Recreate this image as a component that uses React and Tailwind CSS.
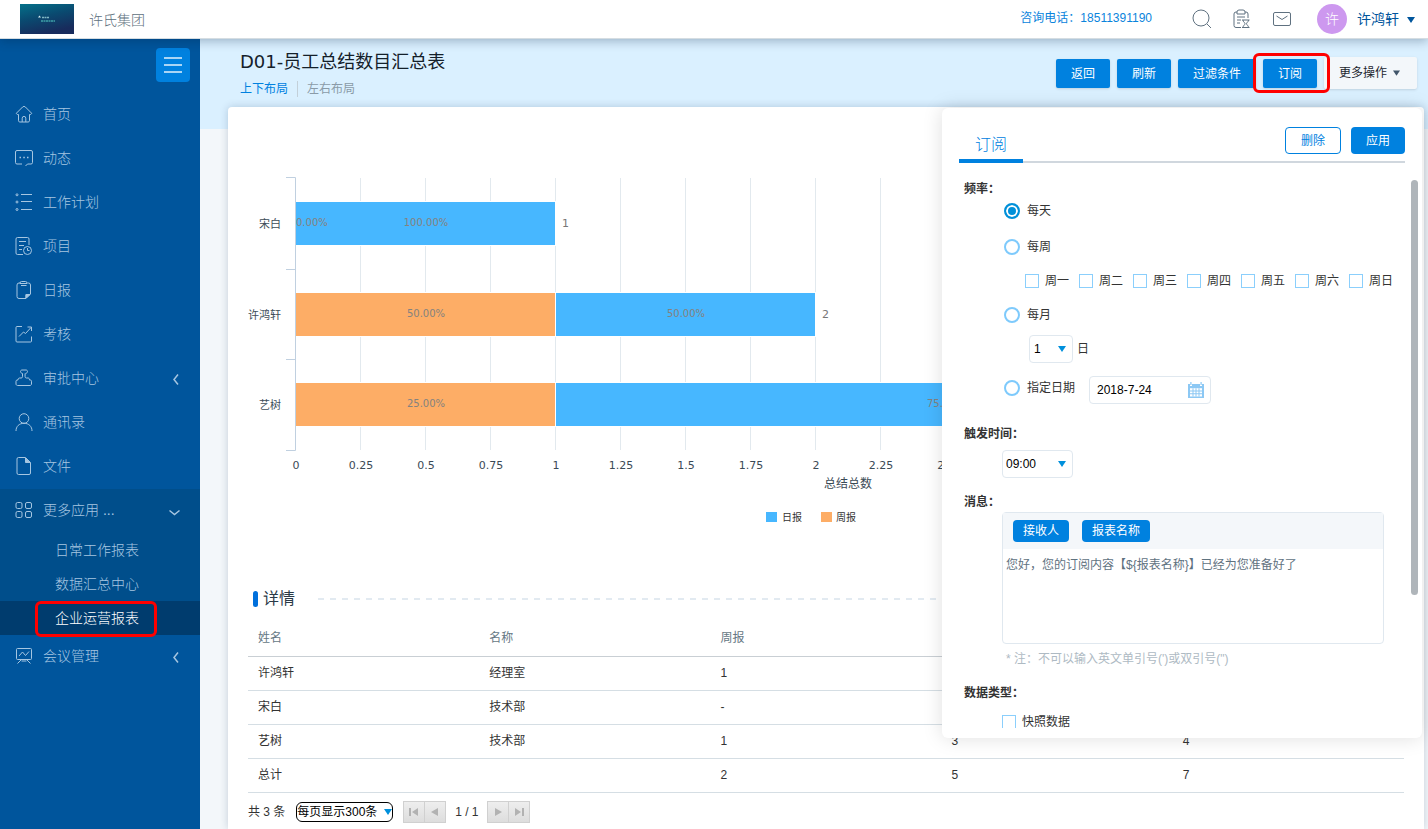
import React from "react";

const icons = {
  home: (
    <>
      <path d="M3.5 9.5v6.2c0 .7.5 1.3 1.300 1.300h8.400c.7 0 1.300-.6 1.300-1.300V9.500h1.200L16.700 8.300 10.400 2a2 2 0 0 0-2.800 0L1.300 8.300l1 1.200z" />
      <path d="M7.200 17v-3.800a1.800 1.800 0 0 1 3.600 0V17" />
    </>
  ),
  message: (
    <>
      <path d="M7 15H2a1.500 1.500 0 0 1-1.500-1.500V3A1.500 1.500 0 0 1 2 1.500h14A1.500 1.500 0 0 1 17.500 3v10.500A1.500 1.500 0 0 1 16 15h-3.500L10.500 17" />
      <path d="M4.500 8.500h1.500M8.300 8.500h1.500M12 8.500h1.500" strokeWidth="1.500" />
    </>
  ),
  list: (
    <>
      <circle cx="2" cy="1.800" r="1" />
      <circle cx="2" cy="9" r="1" />
      <circle cx="2" cy="16.500" r="1" />
      <path d="M6 1.500h11M6 8.500h11M6 16.500h11" />
    </>
  ),
  project: (
    <>
      <path d="M8 17.500H2.500A1.500 1.500 0 0 1 1 16V2A1.500 1.500 0 0 1 2.500.5h10A1.500 1.500 0 0 1 14 2v6M4 4.500h7M4 8.500h5M4 12.500h3" />
      <circle cx="12.500" cy="13.500" r="4" />
      <path d="M12.500 11v2.500h2" />
    </>
  ),
  daily: (
    <>
      <path d="M5 2H4a2 2 0 0 0-2 2v11.500a2 2 0 0 0 2 2h7l4.500-4.500V4a2 2 0 0 0-2-2h-1" />
      <path d="M5 2.500V2A1.500 1.500 0 0 1 6.500.5h4A1.500 1.500 0 0 1 12 2v.5zM6 4.500h5.500M11 17v-3.500h4" />
      <path d="M11 13.500h4l-4 3.500z" fill="currentColor" />
    </>
  ),
  review: (
    <>
      <path d="M7 1.500H2A1 1 0 0 0 1 2.500V16a1 1 0 0 0 1 1h13.500a1 1 0 0 0 1-1v-4.500" />
      <path d="M4 11.500l4.500-4.500 2 1.500L16 2.500M12.500 2h4v4" />
    </>
  ),
  stamp: (
    <>
      <path d="M7.500 4.500C6 4 5.500 3.500 5.500 2.500c0-1 .8-1.500 1.500-1.500h4c.8 0 1.500.5 1.500 1.500s-.5 1.500-2 2" />
      <path d="M7.500 4.500v3.200c0 .8-.5 1.300-1.300 1.300H4.500c-.8 0-1.500.7-1.500 2H2c-.5 0-1 .6-1 1.200v2.800c0 .8.700 1.500 1.500 1.500h12.500c.8 0 1.500-.7 1.500-1.500v-2.800c0-.6-.5-1.200-1-1.200h-1c0-1.300-.6-2-1.400-2h-1.700c-.8 0-1.300-.5-1.300-1.300V4.500" />
    </>
  ),
  user: (
    <>
      <circle cx="9" cy="5.500" r="4.800" />
      <path d="M1 18c0-4.500 3-7.700 8-7.700s8 3.200 8 7.700" />
    </>
  ),
  file: (
    <>
      <path d="M10.500.5h-7A1.500 1.500 0 0 0 2 2v14a1.500 1.500 0 0 0 1.500 1.500h10.500a1.500 1.500 0 0 0 1.500-1.500V5.500z" />
      <path d="M10.500 1v4.500h4.500z" fill="currentColor" />
    </>
  ),
  apps: (
    <>
      <rect x="1" y="1.500" width="6" height="6" rx="1.500" />
      <rect x="10.500" y="1.500" width="6" height="6" rx="1.500" />
      <rect x="1" y="10.500" width="6" height="6" rx="1.500" />
      <rect x="10.500" y="10.500" width="6" height="6" rx="1.500" />
    </>
  ),
  board: (
    <>
      <rect x="1.500" y="1.500" width="15" height="11" rx="1" />
      <path d="M4 9l3.500-4 3 3.500L14 4.500M6.500 12.500l-4 4M11.500 12.500l4 4M6.500 14h5" />
    </>
  ),
};

const Icon = ({ name }) => (
  <svg className="h-[18px] w-[18px] shrink-0" viewBox="0 0 18 18" fill="none" stroke="currentColor" strokeWidth="1">
    {icons[name]}
  </svg>
);

const Caret = ({ className }) => (
  <svg className={className} viewBox="0 0 8 6" fill="currentColor">
    <path d="M0 0h8L4 6z" />
  </svg>
);

const menu = [
  { icon: "home", label: "首页" },
  { icon: "message", label: "动态" },
  { icon: "list", label: "工作计划" },
  { icon: "project", label: "项目" },
  { icon: "daily", label: "日报" },
  { icon: "review", label: "考核" },
  { icon: "stamp", label: "审批中心", arrow: true },
  { icon: "user", label: "通讯录" },
  { icon: "file", label: "文件" },
];

const MenuLink = ({ icon, label, arrow }) => (
  <a href="#" className="flex h-11 items-center pr-5 pb-0.5 pl-[15px]">
    <Icon name={icon} />
    <span className="ml-2.5 flex-1">{label}</span>
    {arrow && (
      <svg className="mt-0.5 h-3 w-2" viewBox="0 0 8 12" fill="none" stroke="currentColor" strokeWidth="1.500">
        <path d="M6 1.500L2 6.500l4 5" />
      </svg>
    )}
  </a>
);

const Sidebar = () => (
  <nav className="w-50 shrink-0 bg-[#00559c] pt-[9px] text-sm font-light text-[#a6c6e1]">
    <div className="mb-[11px] flex justify-end pr-2.5">
      <button aria-label="收起菜单" className="flex h-[34px] w-[34px] flex-col items-center justify-center gap-[5px] rounded-sm bg-[#0081df]">
        <span className="h-0.5 w-[18px] bg-[#a9d5f5]" />
        <span className="h-0.5 w-[18px] bg-[#a9d5f5]" />
        <span className="h-0.5 w-[18px] bg-[#a9d5f5]" />
      </button>
    </div>
    {menu.map((item) => (
      <MenuLink key={item.label} {...item} />
    ))}
    <div className="bg-[#004e8b]">
      <a href="#" className="flex h-11 items-center pr-5 pb-0.5 pl-[15px]">
        <Icon name="apps" />
        <span className="ml-2.5 flex-1">更多应用 ...</span>
        <svg className="mt-1 h-2 w-[11px]" viewBox="0 0 11 8" fill="none" stroke="currentColor" strokeWidth="1.500">
          <path d="M.5 2.500l5 4 5-4" />
        </svg>
      </a>
      <a href="#" className="flex h-[34px] items-center pl-[55px]">日常工作报表</a>
      <a href="#" className="flex h-[34px] items-center pl-[55px]">数据汇总中心</a>
      <a href="#" className="relative flex h-[34px] items-center bg-[#003c6e] pl-[55px] text-white">
        企业运营报表
        <span className="absolute top-0 -bottom-0.5 left-[35px] w-[122px] rounded-md border-3 border-[#ff0000]" />
      </a>
    </div>
    <MenuLink icon="board" label="会议管理" arrow />
  </nav>
);

const TopBar = () => (
  <header className="relative z-10 flex h-[39px] items-center border-b border-[#d5dde2] bg-white pr-[13px] pl-5 shadow-[0_2px_10px_rgba(0,30,60,0.3)]">
    <svg className="h-[30px] w-[54px]" viewBox="0 0 54 30">
      <defs>
        <linearGradient id="logo" x1="0" y1="0" x2="0.400" y2="1">
          <stop offset="0" stopColor="#04718a" />
          <stop offset="0.500" stopColor="#0a4a70" />
          <stop offset="1" stopColor="#182b5c" />
        </linearGradient>
      </defs>
      <rect width="54" height="30" fill="url(#logo)" />
      <path d="M18 13.500l1.500-2 1.500 2z" fill="#d6eef2" />
      <path d="M22 13.500h7" stroke="#7fb6c4" strokeWidth="1.500" strokeDasharray="2 .5" />
      <path d="M21 17h14" stroke="#3fa0a8" strokeWidth="1.500" strokeDasharray="2 .5" />
    </svg>
    <span className="ml-[15px] flex-1 pt-0.5 text-sm font-light text-[#5d6f7c]">许氏集团</span>
    <span className="pb-0.5 text-xs text-[#0a84dc]">咨询电话：18511391190</span>
    <div className="ml-10 flex items-center gap-5 text-[#5f7180]">
      <button aria-label="搜索">
        <svg className="h-5 w-5" viewBox="0 0 20 20" fill="none" stroke="currentColor">
          <circle cx="9" cy="9" r="8" />
          <path d="M15 15l4 4" />
        </svg>
      </button>
      <button aria-label="待办">
        <svg className="h-5 w-5" viewBox="0 0 20 20" fill="none" stroke="currentColor">
          <path d="M9 18.500H4A2 2 0 0 1 2 16.500V5a2 2 0 0 1 2-2h1M13 3h1a2 2 0 0 1 2 2v4" />
          <path d="M5 5V3a2 2 0 0 1 2-2h4a2 2 0 0 1 2 2v2zM5 8h8M5 11h4M5 14h3" />
          <path d="M10 11h7.500M10 18.500h7.500M11 11c0 2 2 2.500 2 3.700s-2 1.800-2 3.800M16.500 11c0 2-2 2.500-2 3.700s2 1.800 2 3.800" />
        </svg>
      </button>
      <button aria-label="邮件">
        <svg className="h-5 w-5" viewBox="0 0 20 20" fill="none" stroke="currentColor">
          <rect x="1.500" y="3.500" width="17" height="13" rx="1.500" />
          <path d="M4.500 7l5.500 3.500L15.500 7" />
        </svg>
      </button>
    </div>
    <div className="ml-[25px] flex h-[30px] w-[30px] shrink-0 items-center justify-center rounded-full bg-[#cd98ef] text-sm font-light text-white">
      许
    </div>
    <button className="ml-2.5 flex items-center gap-2 text-sm text-[#00559c]">
      许鸿轩
      <Caret className="mt-0.5 h-1.5 w-2" />
    </button>
  </header>
);

// chart geometry: one unit on the value axis is 260px
const UNIT = 260;
const X0 = 48;
const ticks = [0, 0.25, 0.5, 0.75, 1, 1.25, 1.5, 1.75, 2, 2.25, 2.5, 2.75, 3, 3.25, 3.5, 3.75, 4];
const bars = [
  { name: "宋白", weekly: 0, daily: 1, y: 95 },
  { name: "许鸿轩", weekly: 1, daily: 1, y: 186 },
  { name: "艺树", weekly: 1, daily: 3, y: 276 },
];

const percent = (part, total) => `${((part / total) * 100).toFixed(2)}%`;

const Chart = () => (
  <svg className="block h-auto w-full font-['Noto_Sans_CJK_SC',sans-serif]" viewBox="0 0 1156 470">
    {ticks.slice(1).map((t) => (
      <path key={t} d={`M${X0 + t * UNIT - 0.5} 71v272`} stroke="#e2e9ee" />
    ))}
    <path d="M38 70.500h9.500v273H38M38 162.500h9.500M38 252.500h9.500" fill="none" stroke="#c0d0e0" />
    {bars.map(({ name, weekly, daily, y }) => {
      const total = weekly + daily;
      const split = X0 + weekly * UNIT;
      return (
        <g key={name}>
          <rect x={X0} y={y - 1} width={total * UNIT} height="45" fill="#fff" />
          {weekly > 0 && <rect x={X0} y={y} width={weekly * UNIT - 1} height="43" fill="#fdad66" />}
          <rect x={split} y={y} width={daily * UNIT - 1} height="43" fill="#47b7ff" />
          <text x="33" y={y + 26} textAnchor="end" fontSize="11" fill="#3d4d58">{name}</text>
          <g fontSize="10" fill="#84827f" className="font-['DejaVu_Sans',sans-serif]">
            {weekly > 0 ? (
              <text x={X0 + (weekly * UNIT) / 2} y={y + 24} textAnchor="middle">{percent(weekly, total)}</text>
            ) : (
              <text x={X0} y={y + 24}>0.00%</text>
            )}
            <text x={split + (daily * UNIT) / 2} y={y + 24} textAnchor="middle">{percent(daily, total)}</text>
          </g>
          <text x={X0 + total * UNIT + 6} y={y + 25} fontSize="11" fill="#777" className="font-['DejaVu_Sans',sans-serif]">
            {total}
          </text>
        </g>
      );
    })}
    <g fontSize="11" fill="#3b4a56" textAnchor="middle" className="font-['DejaVu_Sans',sans-serif]">
      {ticks.map((t) => (
        <text key={t} x={X0 + t * UNIT} y="362">{t}</text>
      ))}
    </g>
    <text x="600" y="381" textAnchor="middle" fontSize="12" fill="#3b4a56">总结总数</text>
    <rect x="518" y="405" width="11" height="10" fill="#47b7ff" />
    <text x="534" y="414" fontSize="10" fill="#333">日报</text>
    <rect x="573" y="405" width="11" height="10" fill="#fdad66" />
    <text x="588" y="414" fontSize="10" fill="#333">周报</text>
  </svg>
);

const columns = ["姓名", "名称", "周报", "日报", "合计"];
const rows = [
  ["许鸿轩", "经理室", "1", "1", "2"],
  ["宋白", "技术部", "-", "1", "1"],
  ["艺树", "技术部", "1", "3", "4"],
  ["总计", "", "2", "5", "7"],
];

const Details = () => (
  <table className="w-full table-fixed text-left text-xs">
    <thead>
      <tr className="h-[35px] border-b border-[#c9cfd4] text-[#667884]">
        {columns.map((c) => (
          <th key={c} className="px-2.5 font-normal">{c}</th>
        ))}
      </tr>
    </thead>
    <tbody>
      {rows.map((row) => (
        <tr key={row[0]} className="h-[34px] border-b border-[#d5dee4] text-[#333]">
          {row.map((cell, i) => (
            <td key={columns[i]} className="px-2.5">{cell}</td>
          ))}
        </tr>
      ))}
    </tbody>
  </table>
);

const PageButton = ({ label, children }) => (
  <button aria-label={label} className="flex h-[22px] w-[22px] items-center justify-center border border-[#d0d0d0] bg-linear-to-b from-[#eee] to-[#ddd] text-[#b2b2b2] not-first:-ml-px">
    <svg className="h-2 w-2.5" viewBox="0 0 10 8" fill="currentColor">{children}</svg>
  </button>
);

const Pager = () => (
  <div className="flex items-center pt-2 text-xs text-[#333]">
    <span>共 3 条</span>
    <div className="relative ml-[11px]">
      <select aria-label="每页条数" className="block h-5 w-[97px] appearance-none rounded-md border border-black bg-white text-xs text-black">
        <option>每页显示300条</option>
      </select>
      <Caret className="pointer-events-none absolute top-[7px] right-px h-1.5 w-2 text-[#0090dc]" />
    </div>
    <div className="ml-2.5 flex">
      <PageButton label="第一页"><path d="M0 0h2v8H0zM9 0v8L3 4z" /></PageButton>
      <PageButton label="上一页"><path d="M8 0v8L1 4z" /></PageButton>
    </div>
    <span className="w-[41px] text-center">1 / 1</span>
    <div className="flex">
      <PageButton label="下一页"><path d="M2 0v8l7-4z" /></PageButton>
      <PageButton label="最后一页"><path d="M8 0h2v8H8zM1 0v8l6-4z" /></PageButton>
    </div>
  </div>
);

const Radio = ({ label, ...props }) => (
  <label className="flex items-center gap-[7px]">
    <input
      type="radio"
      name="frequency"
      className="h-4 w-4 appearance-none rounded-full border-2 border-[#7ecafc] bg-white checked:border-[#0090d9] checked:bg-[#0090d9] checked:shadow-[inset_0_0_0_2px_#fff]"
      {...props}
    />
    {label}
  </label>
);

const Checkbox = ({ label }) => (
  <label className="flex items-center gap-1.5">
    <input type="checkbox" className="h-3.5 w-3.5 appearance-none border border-[#8bcffc] bg-white" />
    {label}
  </label>
);

const weekdays = ["周一", "周二", "周三", "周四", "周五", "周六", "周日"];

const SubscribePanel = () => (
  <aside className="absolute top-px right-0.5 flex h-[630px] w-[480px] flex-col rounded-md bg-white pb-2.5 text-xs text-[#333] shadow-[0_0_20px_rgba(0,0,0,0.13)]">
    <div className="mx-[17px] flex h-[55px] items-end justify-between border-b-2 border-[#d0d7de]">
      <h2 className="-mb-0.5 w-16 border-b-4 border-[#0081df] pb-0.5 text-center text-base font-light text-[#0081df]">订阅</h2>
      <div className="mb-[7px] flex gap-2.5">
        <button className="h-[27px] w-14 rounded border border-[#0081df] text-[#0081df]">删除</button>
        <button className="h-[27px] w-[54px] rounded bg-[#0081df] text-white">应用</button>
      </div>
    </div>
    <div className="flex min-h-0 flex-1 justify-between pr-1">
      <form className="flex-1 overflow-hidden pt-4 pl-[22px]">
        <h3 className="h-5 leading-5 font-bold">频率：</h3>
        <div className="pl-10">
          <div className="flex h-6 items-center">
            <Radio label="每天" defaultChecked />
          </div>
          <div className="mt-3 flex h-6 items-center">
            <Radio label="每周" />
          </div>
          <div className="mt-3 flex h-5 items-center gap-2.5 pl-[21px]">
            {weekdays.map((d) => (
              <Checkbox key={d} label={d} />
            ))}
          </div>
          <div className="mt-3 flex h-6 items-center">
            <Radio label="每月" />
          </div>
          <label className="mt-2 flex items-center pl-[25px]">
            <span className="relative mr-1">
              <select className="block h-7 w-11 appearance-none rounded-sm border border-[#e0e8ef] bg-white pl-1 text-xs text-black">
                <option>1</option>
              </select>
              <Caret className="pointer-events-none absolute top-[11px] right-[7px] h-1.5 w-2 text-[#0090dc]" />
            </span>
            日
          </label>
          <div className="mt-[13px] flex h-7 items-start">
            <div className="flex h-6 items-center">
              <Radio label="指定日期" />
            </div>
            <div className="relative ml-3.5">
              <input
                type="text"
                aria-label="日期"
                defaultValue="2018-7-24"
                className="block h-7 w-[122px] rounded-sm border border-[#e0e8ef] px-[7px] text-xs text-black"
              />
              <svg className="pointer-events-none absolute top-1.5 right-[7px] h-4 w-4" viewBox="0 0 16 16" fill="#8cc8f4">
                <path d="M0 2h2v2h2V2h8v2h2V2h2v14H0zM2.300 0h1.200v3H2.300zM12.500 0h1.200v3h-1.200z" />
                <path d="M2 6.200h12v8.300H2z" fill="#fff" />
                <path d="M2 8.500h12v1H2zM2 11.300h12v1H2zM4.500 6.200h1v8.300h-1zM7.500 6.200h1v8.300h-1zM10.500 6.200h1v8.300h-1z" />
              </svg>
            </div>
          </div>
        </div>
        <h3 className="mt-5 h-5 leading-5 font-bold">触发时间：</h3>
        <div className="relative mt-1.5 ml-[38px] w-[71px]">
          <select aria-label="触发时间" className="block h-7 w-full appearance-none rounded-sm border border-[#e0e8ef] bg-white pl-[3px] text-xs text-black">
            <option>09:00</option>
          </select>
          <Caret className="pointer-events-none absolute top-[11px] right-[7px] h-1.5 w-2 text-[#0090dc]" />
        </div>
        <h3 className="mt-3.5 h-5 leading-5 font-bold">消息：</h3>
        <div className="mr-[27px] ml-[38px] rounded-sm border border-[#e0e8ef]">
          <div className="flex h-9 items-center gap-[13px] bg-[#f4f7fa] px-2.5">
            <button type="button" className="h-[22px] w-14 rounded bg-[#0081df] text-white">接收人</button>
            <button type="button" className="h-[22px] w-[68px] rounded bg-[#0081df] text-white">报表名称</button>
          </div>
          <textarea
            aria-label="消息"
            defaultValue="您好，您的订阅内容【${报表名称}】已经为您准备好了"
            className="block h-[94px] w-full resize-none px-[3px] pt-1.5 text-xs leading-5 text-[#5f727f]"
          />
        </div>
        <p className="mt-[5px] h-5 pl-[42px] leading-5 text-[#aebac3]">* 注：不可以输入英文单引号(')或双引号(")</p>
        <h3 className="mt-3.5 h-5 leading-5 font-bold">数据类型：</h3>
        <div className="mt-[9px] flex h-5 items-center pl-[38px]">
          <Checkbox label="快照数据" />
        </div>
      </form>
      <div className="mt-[17px] h-[415px] w-[7px] rounded-full bg-[#afb5ba]" />
    </div>
  </aside>
);

const PageHeader = () => (
  <div className="flex h-[68px] justify-between pr-[11px] pl-10">
    <div className="pt-2.5">
      <h1 className="font-['DejaVu_Sans','Noto_Sans_CJK_SC',sans-serif] text-lg leading-[26px] text-[#14202a]">
        D01-员工总结数目汇总表
      </h1>
      <div className="mt-1 flex h-5 items-center text-xs">
        <a href="#" className="text-[#0081df]">上下布局</a>
        <span className="mx-[9px] h-4 w-px bg-[#c3d0d9]" />
        <a href="#" className="text-[#8a9ba8]">左右布局</a>
      </div>
    </div>
    <div className="mt-[18px] flex h-8 items-center gap-[7px] text-xs text-white">
      <button className="h-[29px] w-[54px] rounded-xs bg-[#0081df] pt-0.5 shadow-sm">返回</button>
      <button className="h-[29px] w-[54px] rounded-xs bg-[#0081df] pt-0.5 shadow-sm">刷新</button>
      <button className="h-[29px] w-[78px] rounded-xs bg-[#0081df] pt-0.5 shadow-sm">过滤条件</button>
      <div className="relative">
        <button className="block h-[29px] w-[54px] rounded-xs bg-[#0081df] pt-0.5 shadow-sm">订阅</button>
        <span className="absolute -top-1.5 -right-[13px] -bottom-[5px] -left-2.5 z-10 rounded-md border-3 border-[#ff0000]" />
      </div>
      <button className="flex h-8 w-[93px] items-center gap-1.5 rounded-xs bg-[#f3f7fa] pl-[15px] text-[#1c262e] shadow-sm">
        更多操作
        <Caret className="h-1.5 w-[7px] text-[#41566a]" />
      </button>
    </div>
  </div>
);

const App = () => {
  return (
    <div className="flex min-h-screen flex-col font-['Liberation_Sans','Noto_Sans_CJK_SC',sans-serif]">
      <TopBar />
      <div className="flex flex-1">
        <Sidebar />
        <main className="flex min-w-0 flex-1 flex-col bg-[linear-gradient(#daf0ff_90px,#f3f7fa_90px)]">
          <PageHeader />
          <div className="relative mr-1 ml-7 flex-1 rounded-t bg-white px-5 shadow-[0_0_8px_rgba(0,40,80,0.2)]">
            <Chart />
            <div className="flex h-11 items-center pl-[5px]">
              <span className="h-4 w-[5px] rounded-sm bg-[#0070dc]" />
              <h2 className="mr-[23px] ml-[5px] text-base text-[#2b3a47]">详情</h2>
              <span className="h-0.5 flex-1 bg-[repeating-linear-gradient(90deg,#e2eaf1_0_6px,transparent_6px_12px)]" />
            </div>
            <Details />
            <Pager />
            <SubscribePanel />
          </div>
        </main>
      </div>
    </div>
  );
};

export default App;
